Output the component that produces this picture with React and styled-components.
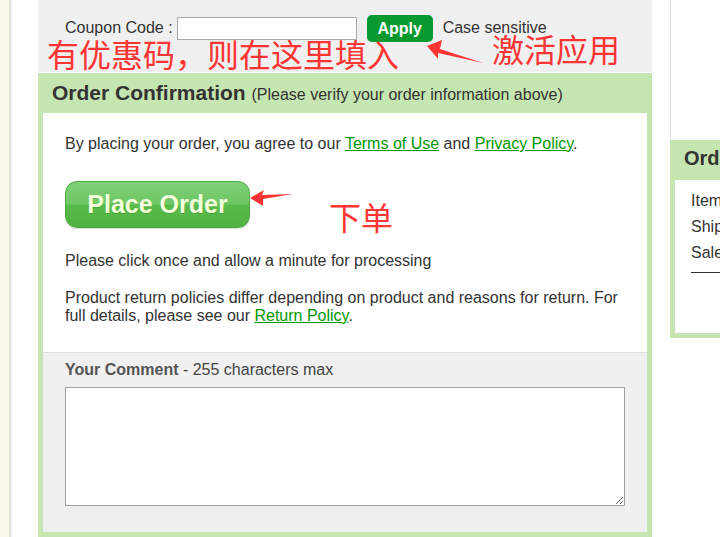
import React from 'react'
import styled, { createGlobalStyle } from 'styled-components'

const GlobalStyle = createGlobalStyle`
  body {
    margin: 0;
    background: #fff;
    font-family: "Liberation Sans", Arial, sans-serif;
    color: #333;
    overflow: hidden;
  }
`

function Arrow({ left, top, width, height, points }) {
  return (
    <ArrowSvg style={{ left, top }} width={width} height={height} viewBox={`0 0 ${width} ${height}`}>
      <polygon points={points} fill="#ff3535" />
    </ArrowSvg>
  )
}

function CouponBar() {
  return (
    <CouponRow>
      <CouponLabel>Coupon Code :</CouponLabel>
      <CouponInput type="text" />
      <ApplyButton>Apply</ApplyButton>
      <CouponNote>Case sensitive</CouponNote>
    </CouponRow>
  )
}

function OrderConfirmation() {
  return (
    <Panel>
      <PanelHeader>
        Order Confirmation <small>(Please verify your order information above)</small>
      </PanelHeader>
      <PanelBody>
        <Para>
          By placing your order, you agree to our <Link href="#">Terms of Use</Link> and{' '}
          <Link href="#">Privacy Policy</Link>.
        </Para>
        <PlaceOrder>Place Order</PlaceOrder>
        <Para $gap="24px">Please click once and allow a minute for processing</Para>
        <Para $gap="19px">
          Product return policies differ depending on product and reasons for return. For
          full details, please see our <Link href="#">Return Policy</Link>.
        </Para>
      </PanelBody>
      <CommentBox>
        <CommentLabel>
          <b>Your Comment</b> - 255 characters max
        </CommentLabel>
        <CommentInput />
      </CommentBox>
    </Panel>
  )
}

function Sidebar() {
  return (
    <Side>
      <SideTop />
      <SummaryPanel>
        <SummaryHeader>Order Summary</SummaryHeader>
        <SummaryBody>
          <SummaryRow>Items</SummaryRow>
          <SummaryRow>Shipping</SummaryRow>
          <SummaryRow>Sales Tax</SummaryRow>
          <SummaryRule />
        </SummaryBody>
      </SummaryPanel>
    </Side>
  )
}

export default function App() {
  return (
    <Page>
      <GlobalStyle />
      <Edge />
      <MainColumn>
        <CouponBar />
        <OrderConfirmation />
      </MainColumn>
      <Sidebar />

      <Note style={{ left: 47, top: 37 }}>有优惠码，则在这里填入</Note>
      <Note style={{ left: 492, top: 32 }}>激活应用</Note>
      <Note style={{ left: 329, top: 200 }}>下单</Note>
      <Arrow
        left={425}
        top={38}
        width={60}
        height={28}
        points="2,8 17,2 15,11 58,25 13,15 13,21"
      />
      <Arrow
        left={248}
        top={188}
        width={47}
        height={20}
        points="2,10 16,2 14,7 45,6 15,11 15,18"
      />
    </Page>
  )
}

const Page = styled.div`
  position: relative;
  display: flex;
  align-items: flex-start;
  width: max-content;
  min-height: 537px;
`

const Edge = styled.div`
  width: 12px;
  height: 537px;
  margin-right: 26px;
  background: linear-gradient(
    to right,
    #fafaea 0,
    #fafaea 9px,
    #dcdcd4 9px,
    #ececea 11px,
    #f6f6f6 12px
  );
`

const MainColumn = styled.div`
  width: 614px;
  display: flex;
  flex-direction: column;
`

const CouponRow = styled.div`
  box-sizing: border-box;
  height: 72px;
  margin-bottom: 1px;
  padding: 15px 0 0 27px;
  display: flex;
  align-items: flex-start;
  background: #f0f0f0;
  font-size: 16px;
`

const CouponLabel = styled.span`
  line-height: 26px;
  margin-right: 4px;
  color: #333;
`

const CouponInput = styled.input`
  box-sizing: border-box;
  width: 180px;
  height: 23px;
  margin: 2px 10px 0 0;
  border: 1px solid #aaa;
  background: #fff;
  outline: none;
`

const ApplyButton = styled.button`
  height: 27px;
  width: 66px;
  padding: 0;
  border: 0;
  border-radius: 5px;
  background: #08992f;
  color: #fff;
  font: bold 16px "Liberation Sans", Arial, sans-serif;
  margin-right: 10px;
`

const CouponNote = styled.span`
  line-height: 26px;
  color: #333;
`

const Panel = styled.section`
  border: 5px solid #c6e6b1;
  background: #c6e6b1;
`

const PanelHeader = styled.h2`
  margin: 0;
  height: 35px;
  padding-left: 9px;
  line-height: 29px;
  font-size: 21px;
  font-weight: bold;
  color: #333;

  small {
    font-size: 16px;
    font-weight: normal;
  }
`

const PanelBody = styled.div`
  background: #fff;
  padding: 22px 22px 27px;
`

const Para = styled.p`
  margin: ${p => p.$gap || '0'} 0 0;
  font-size: 16px;
  line-height: 18px;
  color: #333;
`

const Link = styled.a`
  color: #009900;
  text-decoration: underline;
`

const PlaceOrder = styled.button`
  display: block;
  width: 185px;
  height: 47px;
  margin-top: 28px;
  padding: 0;
  border: 1px solid #4ea942;
  border-radius: 12px;
  background: linear-gradient(#80d077, #6fc765 48%, #58bb4a 52%, #4fb241);
  box-shadow: 0 1px 1px rgba(0, 0, 0, 0.15);
  color: #f4ffdc;
  font: bold 25px "Liberation Sans", Arial, sans-serif;
  text-shadow: 0 1px 0 rgba(0, 80, 0, 0.2);
`

const CommentBox = styled.div`
  border-top: 1px solid #dddddd;
  background: #f0f0f0;
  padding: 8px 22px 26px;
`

const CommentLabel = styled.div`
  font-size: 16px;
  line-height: 18px;
  color: #444;

  b {
    color: #555;
  }
`

const CommentInput = styled.textarea`
  display: block;
  box-sizing: border-box;
  width: 560px;
  height: 119px;
  margin-top: 8px;
  border: 1px solid #a0a0a0;
  background: #fff;
  outline: none;
`

const Side = styled.aside`
  width: 250px;
  margin-left: 18px;
  display: flex;
  flex-direction: column;
`

const SideTop = styled.div`
  height: 140px;
  border-left: 1px solid #dddddd;
  box-sizing: border-box;
`

const SummaryPanel = styled.section`
  border: 5px solid #c6e6b1;
  background: #c6e6b1;
`

const SummaryHeader = styled.h3`
  margin: 0;
  height: 35px;
  padding-left: 9px;
  line-height: 26px;
  font-size: 20px;
  font-weight: bold;
  color: #333;
`

const SummaryBody = styled.div`
  height: 153px;
  box-sizing: border-box;
  padding: 8px 0 0 16px;
  background: #fff;
`

const SummaryRow = styled.div`
  font-size: 16px;
  line-height: 26px;
  color: #333;
`

const SummaryRule = styled.div`
  margin-top: 6px;
  border-top: 1px solid #333;
`

const Note = styled.span`
  position: absolute;
  font-family: "Noto Sans CJK SC", sans-serif;
  font-size: 32px;
  line-height: 32px;
  color: #ff3535;
  white-space: nowrap;
`

const ArrowSvg = styled.svg`
  position: absolute;
`
